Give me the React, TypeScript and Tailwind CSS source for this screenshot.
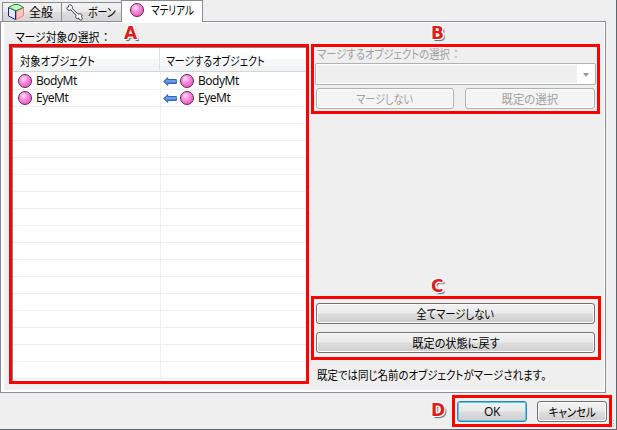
import React from "react";

const jp = "[font-family:'Noto_Sans_CJK_JP',sans-serif] [font-feature-settings:'palt'] whitespace-nowrap";
const latin = "[font-family:'Noto_Sans',sans-serif] text-[12px] leading-[16px] tracking-[-0.5px] whitespace-nowrap text-[#111]";

function Label({ text, colon = false, className = "" }: { text: string; colon?: boolean; className?: string }) {
  return (
    <span className={`${jp} block text-[12px] leading-[16px] ${className}`}>
      {text}
      {colon && <span className="ml-[4px]">：</span>}
    </span>
  );
}

function Cube() {
  return (
    <svg width="18" height="18" viewBox="0 0 18 18" className="shrink-0">
      <path d="M1.5 4.5 8.5 7.5V16.5L1.5 13Z" fill="#e4e8ff" stroke="#20208c" />
      <path d="M9.5 7.5 16.5 4.5V12.5L9.5 16.5Z" fill="#ffc4c4" stroke="#f08088" />
      <path d="M1.5 4.5 7 1.5H11.5L16.5 4.5 9 7.8Z" fill="#c4f5c8" stroke="#128a1c" />
    </svg>
  );
}

function Bone() {
  return (
    <svg width="17" height="17" viewBox="0 0 16 16" className="shrink-0">
      <path
        d="M3.5 .7C2.3.7 2 2 2.4 2.8 1 2.5.4 4.2 1.2 5.2 2 6.2 3.8 6 4.6 5.6L9.5 10.6C9 11.8 9 13.2 10 13.7 11 14.2 11.8 13.7 12 13 12 14.5 13 15.5 14.3 15 15.8 14.2 15.5 12.5 14.4 12 15.4 11.3 15.2 10 14.2 9.5 13.2 9 12 9.2 11.3 9.6L6 4.3C6.5 3 5.8.7 3.5.7Z"
        fill="#fbfbfb"
        stroke="#333"
        strokeWidth=".9"
      />
    </svg>
  );
}

function Ball() {
  return (
    <span className="block h-[14px] w-[14px] shrink-0 rounded-full border border-[#5a2a52] bg-[radial-gradient(circle_at_38%_32%,#ffe0f8_0%,#ff90e0_35%,#f46acb_65%,#c048a0_100%)]" />
  );
}

function Arrow() {
  return (
    <svg width="14" height="9" viewBox="0 0 14 9" className="shrink-0">
      <path d="M.6 4.5 4.8 .6V2.5H13.4V6.5H4.8V8.4Z" fill="#4f86dc" stroke="#2a5cae" strokeWidth=".9" />
      <path d="M3 4H13" stroke="#86b2f4" />
    </svg>
  );
}

const plain = "border-[#707070] shadow-[inset_0_0_0_1px_#fafafa]";

function Button({ children, className = plain }: { children: React.ReactNode; className?: string }) {
  return (
    <button
      className={`flex h-[21px] items-center justify-center rounded-[3px] border bg-[linear-gradient(#f2f2f2_0%,#ebebeb_48%,#dddddd_52%,#cfcfcf_100%)] ${className}`}
    >
      {children}
    </button>
  );
}

function DisabledButton({ children, className = "" }: { children: React.ReactNode; className?: string }) {
  return (
    <button
      disabled
      className={`flex h-[21px] items-center justify-center rounded-[3px] border border-[#adb2b5] bg-[#f4f4f4] text-[#a0a0a0] shadow-[inset_0_0_0_1px_#fcfcfc] ${className}`}
    >
      {children}
    </button>
  );
}

function Mark({ letter, className }: { letter: string; className: string }) {
  return (
    <span
      className={`absolute [font-family:'DejaVu_Sans',sans-serif] text-[17px] font-bold leading-[20px] text-[#d9201c] [text-shadow:-1px_-1px_0_#fff,1px_-1px_0_#fff,-1px_1px_0_#fff,1px_1px_0_#fff,2px_2px_1px_#4b7180] ${className}`}
    >
      {letter}
    </span>
  );
}

const materials = ["BodyMt", "EyeMt"];
const rows = Array.from({ length: 18 }, (_, i) => materials[i] ?? "");

export default function App() {
  return (
    <div className="relative flex h-[430px] w-[617px] flex-col overflow-hidden border-b border-r border-[#5b6770] bg-[#efefef] text-black">
      <div className="flex h-[21px] items-end pl-[2px]">
        <div className="flex h-[19px] w-[59px] items-center border-l border-t border-[#898c95] bg-[linear-gradient(#f2f2f2_0%,#ebebeb_48%,#dddddd_52%,#d5d5d5_100%)] pl-[4px]">
          <Cube />
          <Label text="全般" className="ml-[4px]" />
        </div>
        <div className="flex h-[19px] w-[60px] items-center border-l border-t border-[#898c95] bg-[linear-gradient(#f2f2f2_0%,#ebebeb_48%,#dddddd_52%,#d5d5d5_100%)] pl-[4px]">
          <Bone />
          <Label text="ボーン" className="ml-[5px] origin-left scale-x-[0.83]" />
        </div>
        <div className="z-10 -mb-[1px] flex h-[22px] w-[82px] items-start border-l border-r border-t border-[#898c95] bg-white pl-[8px] pt-[2px]">
          <Ball />
          <Label text="マテリアル" className="-mt-px ml-[7px] origin-left scale-x-[0.8]" />
        </div>
      </div>

      <div className="flex h-[372px] w-[606px] border border-[#898c95] bg-white pb-[2px] pl-[3px] pr-[1px] pt-px">
        <div className="flex flex-1 bg-[#efefef]">
          <div className="w-[303px] pl-[8px] pt-[6px]">
            <Label text="マージ対象の選択" colon className="ml-[3px] origin-left scale-x-[0.9]" />
            <div className="mt-[2px] h-[334px] w-[294px] overflow-hidden border-l border-t border-[#828790] bg-white">
              <div className="flex h-[24px] border-b border-[#d5d5d5] bg-[linear-gradient(#fff_0%,#fff_45%,#f7f8fa_50%,#f1f2f4_100%)]">
                <div className="w-[147px] border-r border-[#dedfe1] pl-[7px] pt-[5px]">
                  <Label text="対象オブジェクト" className="origin-left scale-x-[0.86]" />
                </div>
                <div className="pl-[6px] pt-[5px]">
                  <Label text="マージするオブジェクト" className="origin-left scale-x-[0.83]" />
                </div>
              </div>
              {rows.map((name, i) => (
                <div key={i} className={`flex border-b border-[#efefef] ${i === 0 ? "h-[18px]" : "h-[17px]"}`}>
                  <div className={`flex w-[148px] items-center border-r border-[#efefef] pl-[5px] ${i === 0 ? "pt-px" : ""}`}>
                    {name && <Ball />}
                    <span className={`${latin} ml-[4px]`}>{name}</span>
                  </div>
                  <div className={`flex items-center pl-[2px] ${i === 0 ? "pt-px" : ""}`}>
                    {name && <Arrow />}
                    {name && <span className="ml-[3px]"><Ball /></span>}
                    <span className={`${latin} ml-[4px]`}>{name}</span>
                  </div>
                </div>
              ))}
            </div>
          </div>

          <div className="flex w-[290px] flex-col pl-[8px] pt-[23px]">
            <Label text="マージするオブジェクトの選択" colon className="ml-[2px] origin-left scale-x-[0.86] text-[#a0a0a0]" />
            <div className="mt-px flex h-[22px] w-[281px] rounded-[2px] border border-[#adb2b5] bg-white p-px">
              <div className="w-[260px] bg-[#efefef]" />
              <div className="flex flex-1 items-center justify-center">
                <div className="mt-[2px] border-x-[3.5px] border-t-4 border-x-transparent border-t-[#999]" />
              </div>
            </div>
            <div className="mt-[3px] flex gap-[11px] pl-[1px]">
              <DisabledButton className="w-[138px]"><Label text="マージしない" className="scale-x-[0.84]" /></DisabledButton>
              <DisabledButton className="w-[130px]"><Label text="既定の選択" className="scale-x-[0.95]" /></DisabledButton>
            </div>
            <div className="mt-[194px] flex flex-col gap-[8px] pl-[1px]">
              <Button className={`w-[279px] ${plain}`}><Label text="全てマージしない" className="scale-x-[0.86]" /></Button>
              <Button className={`w-[279px] ${plain}`}><Label text="既定の状態に戻す" className="scale-x-[0.93]" /></Button>
            </div>
            <Label text="既定では同じ名前のオブジェクトがマージされます。" className="ml-[2px] mt-[14px] origin-left scale-x-[0.87]" />
          </div>
        </div>
      </div>

      <div className="flex gap-[10px] pl-[457px] pt-[8px]">
        <Button className="w-[70px] border-[#3c7fb1] shadow-[inset_0_0_0_1px_#48d0f7]">
          <span className={latin}>OK</span>
        </Button>
        <Button className={`w-[70px] ${plain}`}><Label text="キャンセル" className="scale-x-[0.87]" /></Button>
      </div>

      <div className="pointer-events-none absolute left-[9px] top-[44px] h-[340px] w-[300px] border-[3px] border-[#f00]" />
      <div className="pointer-events-none absolute left-[311px] top-[44px] h-[70px] w-[289px] border-[3px] border-[#f00]" />
      <div className="pointer-events-none absolute left-[311px] top-[296px] h-[64px] w-[290px] border-[3px] border-[#f00]" />
      <div className="pointer-events-none absolute left-[452px] top-[395px] h-[32px] w-[160px] border-[3px] border-[#f00]" />
      <div className="absolute bottom-[2px] right-[2px] flex flex-col gap-[2px]">
        <span className="h-px w-px bg-[#aaa]" />
        <span className="h-px w-px bg-[#aaa]" />
        <span className="h-px w-px bg-[#aaa]" />
      </div>
      <Mark letter="A" className="left-[124px] top-[23px]" />
      <Mark letter="B" className="left-[431px] top-[23px]" />
      <Mark letter="C" className="left-[431px] top-[276px]" />
      <Mark letter="D" className="left-[431px] top-[400px]" />
    </div>
  );
}
